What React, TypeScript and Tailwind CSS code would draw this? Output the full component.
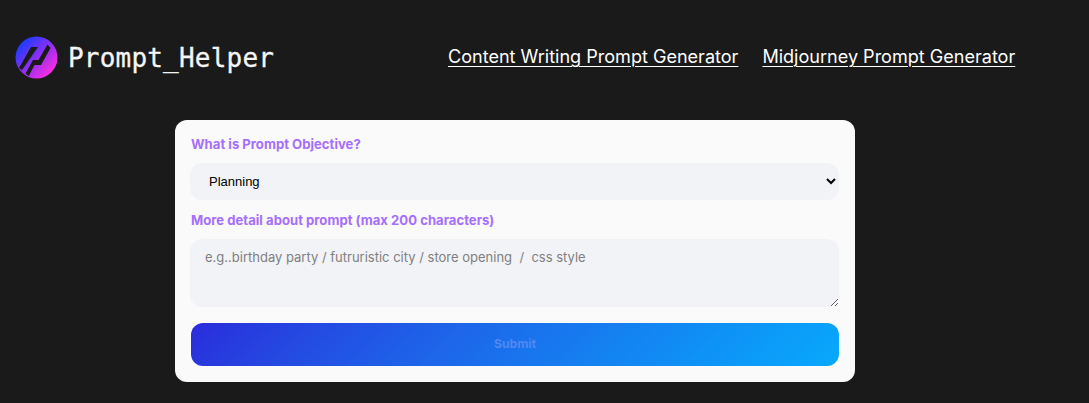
export default function App() {
  return (
    <div className="min-h-[403px] bg-[#1a1a1a] font-['Inter',sans-serif] overflow-hidden">
      <header className="flex items-center h-[114px] pl-[15px]">
        <div className="flex items-center gap-[10px] w-[433px]">
          <svg width="43" height="43" viewBox="0 0 43 43" className="shrink-0">
            <defs>
              <linearGradient id="lg" x1="0.15" y1="0.15" x2="0.85" y2="0.85">
                <stop offset="0" stopColor="#1f3bff" />
                <stop offset="0.45" stopColor="#7f30f5" />
                <stop offset="1" stopColor="#f82ee0" />
              </linearGradient>
            </defs>
            <circle cx="21.5" cy="21.5" r="21" fill="url(#lg)" />
            <path d="M16 11 L23 11 L7 34 L4 32 Z" fill="#1a1a1a" />
            <path d="M32.5 8.5 L35.5 12 L26 29 L19.5 29 L13.8 40 L10.5 37.5 L18 24 L23.5 24 Z" fill="#1a1a1a" />
          </svg>
          <span className="font-['DejaVu_Sans_Mono',monospace] text-[26px] leading-none tracking-[0.2px] text-[#f5f5f5] [-webkit-text-stroke:0.3px_#f5f5f5] translate-y-px">Prompt_Helper</span>
        </div>
        <nav className="flex gap-6 text-[18.06px] leading-[28px] text-white">
          <a className="underline underline-offset-3 decoration-1">Content Writing Prompt Generator</a>
          <a className="underline underline-offset-3 decoration-1">Midjourney Prompt Generator</a>
        </nav>
      </header>
      <main className="ml-[175px] mt-[6px] w-[680px] h-[262px] rounded-xl bg-[#fafafa] px-4 pt-4">
        <label className="block text-[13.13px] leading-[17px] font-bold text-[#a66ffb]">What is Prompt Objective?</label>
        <select className="mt-[10px] block w-[649px] -ml-px h-[37px] rounded-xl bg-[#f2f3f7] pl-[15px] font-['Liberation_Sans',sans-serif] text-[13px] text-black">
          <option>Planning</option>
        </select>
        <label className="mt-[12px] block text-[13.13px] leading-[17px] font-bold text-[#a66ffb]">More detail about prompt (max 200 characters)</label>
        <textarea
          className="mt-[10px] block w-[649px] -ml-px h-[68px] rounded-xl bg-[#f2f3f7] px-[15px] pt-[8px] pb-[10px] text-[13px] leading-[20px] placeholder:text-[#808080]"
          placeholder="e.g..birthday party / futruristic city / store opening  /  css style"
        />
        <button className="mt-[16px] block w-[648px] h-[43px] rounded-xl bg-linear-135 from-[#2a2bdb] to-[#08a9fc] text-[12.2px] font-bold text-[#5088f2]">Submit</button>
      </main>
    </div>
  );
}
